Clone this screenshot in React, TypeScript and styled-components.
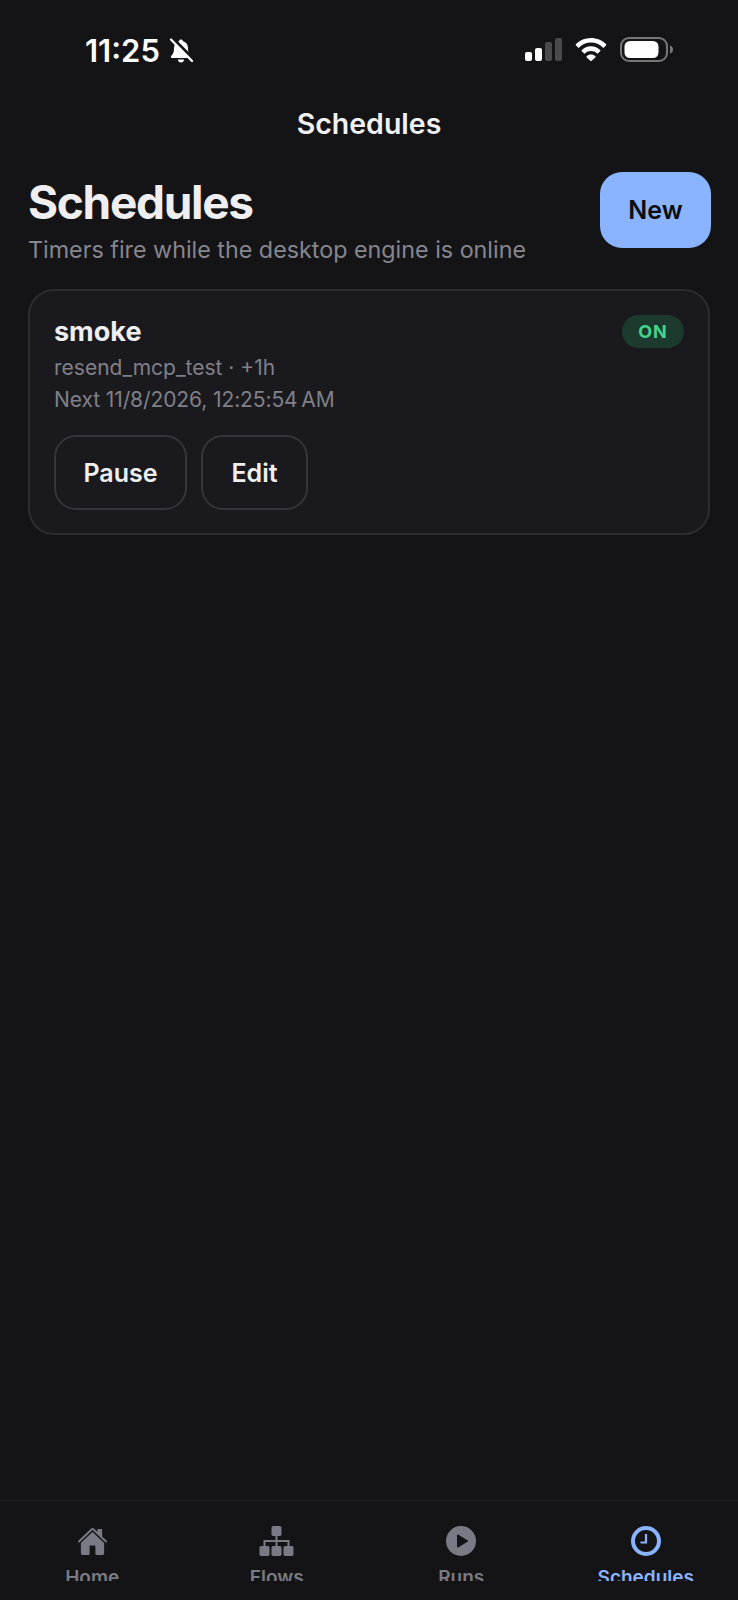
import React from "react";
import styled, { createGlobalStyle } from "styled-components";
import { IoHome } from "react-icons/io5";

const GlobalStyle = createGlobalStyle`
  html, body {
    margin: 0;
    padding: 0;
    background: #141416;
  }
  * {
    box-sizing: border-box;
  }
  body {
    font-family: Inter, "Noto Sans", sans-serif;
    -webkit-font-smoothing: antialiased;
  }
`;

const Screen = styled.div`
  width: 738px;
  height: 1600px;
  display: flex;
  flex-direction: column;
  background: #141416;
  overflow: hidden;
`;

const StatusBar = styled.div`
  height: 100px;
  flex: none;
  padding: 36px 65px 0 85px;
  display: flex;
  justify-content: space-between;
  align-items: flex-start;
`;

const StatusLeft = styled.div`
  display: flex;
  align-items: center;
  gap: 8px;
  height: 30px;
  color: #fff;
`;

const Clock = styled.span`
  font-size: 31px;
  line-height: 30px;
  font-weight: 600;
`;

const StatusRight = styled.div`
  display: flex;
  align-items: center;
  gap: 13px;
  height: 26px;
`;

const NavTitle = styled.div`
  height: 48px;
  flex: none;
  text-align: center;
  color: #f1f1f3;
  font-size: 28.5px;
  line-height: 48px;
  font-weight: 600;
`;

const Content = styled.main`
  flex: 1;
  padding: 26px 27px 0 28px;
`;

const Header = styled.header`
  display: flex;
  justify-content: space-between;
  align-items: flex-start;
`;

const Heading = styled.h1`
  margin: 0 0 4px;
  color: #efeff1;
  font-size: 46px;
  line-height: 56px;
  font-weight: 700;
  letter-spacing: -1.3px;
`;

const Subtitle = styled.p`
  margin: 0;
  color: #86868f;
  font-size: 23.3px;
  line-height: 32px;
`;

const PrimaryButton = styled.button`
  width: 111px;
  height: 76px;
  margin-top: -2px;
  border: 0;
  border-radius: 22px;
  background: #8ab4ff;
  color: #0c0c0e;
  font: 600 25px Inter, sans-serif;
`;

const Card = styled.section`
  margin: 23px 1px 0 0;
  padding: 24px 24px 23px;
  border: 2px solid #2c2c31;
  border-radius: 26px;
  background: #1a1a1e;
`;

const CardTop = styled.div`
  display: flex;
  justify-content: space-between;
  align-items: flex-start;
  margin-bottom: 3px;
`;

const CardName = styled.div`
  color: #efeff1;
  font-size: 27px;
  line-height: 34px;
  font-weight: 700;
`;

const Badge = styled.span`
  width: 62px;
  height: 33px;
  border-radius: 17px;
  background: #1c3a2e;
  color: #45d48c;
  font-size: 18px;
  line-height: 33px;
  font-weight: 700;
  letter-spacing: 1px;
  text-align: center;
`;

const Meta = styled.div<{ $tight?: boolean }>`
  color: #808089;
  font-size: 21px;
  line-height: 31.5px;
  letter-spacing: ${(p) => (p.$tight ? "-0.1px" : "0")};
`;

const Actions = styled.div`
  display: flex;
  gap: 14px;
  margin-top: 20px;
`;

const GhostButton = styled.button<{ $width: number }>`
  width: ${(p) => p.$width}px;
  height: 75px;
  border: 2px solid #34343a;
  border-radius: 22px;
  background: transparent;
  color: #efeff1;
  font: 600 25px Inter, sans-serif;
`;

const TabBar = styled.nav`
  height: 81px;
  margin-bottom: 19px;
  flex: none;
  display: grid;
  grid-template-columns: repeat(4, 1fr);
  border-top: 1px solid #232328;
  overflow: hidden;
`;

const Tab = styled.div<{ $active?: boolean }>`
  display: flex;
  flex-direction: column;
  align-items: center;
  padding-top: 25px;
  color: ${(p) => (p.$active ? "#8ab4ff" : "#7a7a84")};
`;

const TabIcon = styled.div`
  height: 30px;
  display: flex;
  align-items: center;
  justify-content: center;
`;

const TabLabel = styled.span`
  margin-top: 9px;
  font-size: 19px;
  line-height: 26px;
  font-weight: 600;
`;

const BellSlashIcon = () => (
  <svg width="26" height="26" viewBox="0 0 26 26">
    <path
      d="M13 1.500c-1 0-1.800.7-2 1.700C7.800 4 6 6.800 6 10.200c0 4-1 6-2.800 7.700-.8.800-.3 2 .8 2h18c1.100 0 1.600-1.200.8-2C21 16.200 20 14.200 20 10.200c0-3.400-1.800-6.200-5-7-.2-1-1-1.700-2-1.700zM9.800 21.500c.3 1.700 1.600 3 3.200 3s2.900-1.300 3.200-3z"
      fill="#fff"
    />
    <path d="M5 .5 26 21.500" stroke="#141416" strokeWidth="3" />
    <path d="M3 1.500 24 23" stroke="#fff" strokeWidth="2.200" strokeLinecap="round" />
  </svg>
);

const SignalIcon = () => (
  <svg width="37" height="23" viewBox="0 0 37 23">
    <rect x="0" y="14" width="7" height="9" rx="2" fill="#fff" />
    <rect x="10" y="10" width="7" height="13" rx="2" fill="#fff" />
    <rect x="20" y="4" width="7" height="19" rx="2" fill="#4a4a4d" />
    <rect x="30" y="0" width="7" height="23" rx="2" fill="#4a4a4d" />
  </svg>
);

const WifiIcon = () => (
  <svg width="32" height="23" viewBox="0 0 34 25" fill="#fff">
    <path d="M17 0C10.600 0 4.900 2.500.6 6.600c-.4.4-.4.9 0 1.300l2.300 2.400c.4.4.9.4 1.300 0C7.600 7 12.100 5 17 5s9.400 2 12.800 5.300c.4.4.9.4 1.300 0l2.300-2.400c.4-.4.4-.9 0-1.300C29.100 2.500 23.400 0 17 0z" />
    <path d="M17 9c-3.900 0-7.400 1.500-10 4-.4.4-.4.9 0 1.300l2.300 2.400c.4.4.9.4 1.300 0 1.700-1.600 3.900-2.500 6.400-2.500s4.700.9 6.400 2.500c.4.4.9.4 1.300 0l2.300-2.400c.4-.4.4-.9 0-1.300-2.600-2.500-6.100-4-10-4z" />
    <path d="M17 18c-1.900 0-3.500.7-4.700 1.800-.4.4-.4.9 0 1.300l4 3.600c.4.4 1 .4 1.400 0l4-3.600c.4-.4.4-.9 0-1.300-1.200-1.100-2.800-1.800-4.700-1.800z" />
  </svg>
);

const BatteryIcon = () => (
  <svg width="53" height="25" viewBox="0 0 53 25">
    <rect x="1" y="1" width="46" height="23" rx="8" fill="none" stroke="#77777a" strokeWidth="2" />
    <rect x="4.500" y="4" width="34" height="17" rx="5.500" fill="#fff" />
    <path d="M50 8.500c2 .5 3 2 3 4s-1 3.500-3 4z" fill="#77777a" />
  </svg>
);

// tab icons
const FlowsIcon = () => (
  <svg width="35" height="30" viewBox="0 0 35 30" fill="currentColor">
    <rect x="12.500" y="0" width="10" height="10" rx="1.800" />
    <rect x="0.500" y="20" width="10" height="10" rx="1.800" />
    <rect x="12.500" y="20" width="10" height="10" rx="1.800" />
    <rect x="24.500" y="20" width="10" height="10" rx="1.800" />
    <path d="M16.500 10h2v4h12v6h-2v-4h-10v4h-2v-4h-10v4h-2v-6h12z" />
  </svg>
);

const RunsIcon = () => (
  <svg width="30" height="30" viewBox="0 0 30 30">
    <circle cx="15" cy="15" r="15" fill="currentColor" />
    <path d="M11 9.500v11c0 .8.800 1.200 1.500.8l9-5.500c.6-.4.600-1.200 0-1.600l-9-5.500c-.7-.4-1.500 0-1.500.8z" fill="#141416" />
  </svg>
);

const ScheduleIcon = () => (
  <svg width="30" height="30" viewBox="0 0 30 30" fill="none" stroke="currentColor">
    <circle cx="15" cy="15" r="13" strokeWidth="4" />
    <path d="M15 8v8.500h-5.500" strokeWidth="2.200" />
  </svg>
);

export default function App() {
  return (
    <>
      <GlobalStyle />
      <Screen>
        <StatusBar>
          <StatusLeft>
            <Clock>11:25</Clock>
            <BellSlashIcon />
          </StatusLeft>
          <StatusRight>
            <SignalIcon />
            <WifiIcon />
            <BatteryIcon />
          </StatusRight>
        </StatusBar>
        <NavTitle>Schedules</NavTitle>
        <Content>
          <Header>
            <div>
              <Heading>Schedules</Heading>
              <Subtitle>Timers fire while the desktop engine is online</Subtitle>
            </div>
            <PrimaryButton>New</PrimaryButton>
          </Header>
          <Card>
            <CardTop>
              <CardName>smoke</CardName>
              <Badge>ON</Badge>
            </CardTop>
            <Meta>resend_mcp_test · +1h</Meta>
            <Meta $tight>Next 11/8/2026, 12:25:54{"\u202f"}AM</Meta>
            <Actions>
              <GhostButton $width={133}>Pause</GhostButton>
              <GhostButton $width={107}>Edit</GhostButton>
            </Actions>
          </Card>
        </Content>
        <TabBar>
          <Tab>
            <TabIcon>
              <IoHome size={31} />
            </TabIcon>
            <TabLabel>Home</TabLabel>
          </Tab>
          <Tab>
            <TabIcon>
              <FlowsIcon />
            </TabIcon>
            <TabLabel>Flows</TabLabel>
          </Tab>
          <Tab>
            <TabIcon>
              <RunsIcon />
            </TabIcon>
            <TabLabel>Runs</TabLabel>
          </Tab>
          <Tab $active>
            <TabIcon>
              <ScheduleIcon />
            </TabIcon>
            <TabLabel>Schedules</TabLabel>
          </Tab>
        </TabBar>
      </Screen>
    </>
  );
}
